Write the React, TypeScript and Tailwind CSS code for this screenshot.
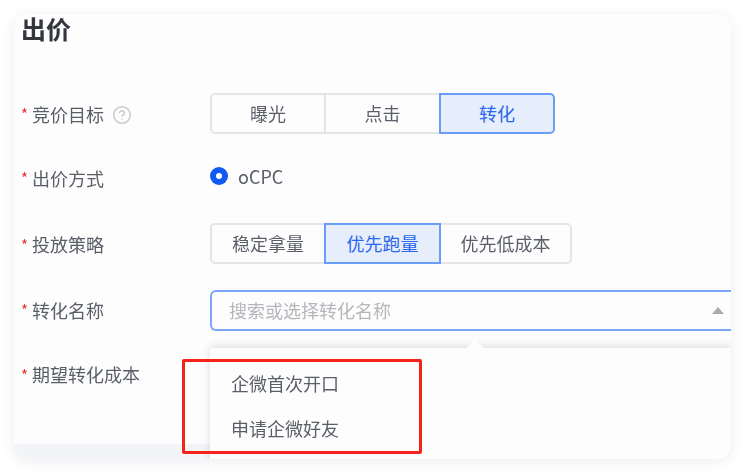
import { CircleHelp } from 'lucide-react'

const FONT = "font-['Noto_Sans_CJK_SC','Noto_Sans',sans-serif]"

function Label({ text, shift = '', children }: { text: string; shift?: string; children?: React.ReactNode }) {
  return (
    <div className={`w-[189px] shrink-0 flex items-center text-[18px] leading-none text-[#5a5e66] ${shift}`}>
      <span className="w-[11px] text-[15px] text-[#e5352b]">*</span>
      <span>{text}</span>
      {children}
    </div>
  )
}

function Segments({ items, active, widths }: { items: string[]; active: number; widths: string[] }) {
  return (
    <div className="flex h-[41px]">
      {items.map((item, i) => (
        <div
          key={item}
          className={`${widths[i]} flex items-center justify-center border-2 text-[18px] ${
            i === active
              ? 'relative z-10 border-[#6b9cf8] bg-[#e6eefc] text-[#2a66ee]'
              : 'border-[#e4e5e7] text-[#5a5e66]'
          } ${i > 0 ? '-ml-[2px]' : ''} ${i === 0 ? 'rounded-l-[5px]' : ''} ${
            i === items.length - 1 ? 'rounded-r-[5px]' : ''
          }`}
        >
          {item}
        </div>
      ))}
    </div>
  )
}

export default function App() {
  return (
    <div className={`${FONT} w-[745px] h-[473px] bg-white p-[14px] overflow-hidden`}>
      <div className="relative w-[717px] h-[445px] rounded-[14px] bg-[#fdfdfe] shadow-[0_2px_14px_rgba(40,50,80,0.09)] flex flex-col blur-[0.6px]">
        <div className="flex-1 pl-[7px]">
          <div className="h-[32px] text-[25px] leading-[28px] font-bold text-[#33363c]">出价</div>

          <div className="mt-[47px] flex items-center h-[41px]">
            <Label text="竞价目标">
              <CircleHelp className="ml-[8px] mt-[2px] w-[20px] h-[20px] text-[#c9cacc]" strokeWidth={1.8} />
            </Label>
            <Segments items={['曝光', '点击', '转化']} active={2} widths={['w-[116px]', 'w-[117px]', 'w-[116px]']} />
          </div>

          <div className="mt-[23px] flex items-center h-[41px]">
            <Label text="出价方式" />
            <div className="flex items-center -mt-[3px] text-[18px] text-[#5a5e66]">
              <span className="w-[18px] h-[18px] rounded-full bg-[#1059f3] flex items-center justify-center">
                <span className="w-[6px] h-[6px] rounded-full bg-white" />
              </span>
              <span className="ml-[10px]">oCPC</span>
            </div>
          </div>

          <div className="mt-[25px] flex items-center h-[41px]">
            <Label text="投放策略" shift="mt-[1px]" />
            <Segments
              items={['稳定拿量', '优先跑量', '优先低成本']}
              active={1}
              widths={['w-[116px]', 'w-[117px]', 'w-[133px]']}
            />
          </div>

          <div className="mt-[26px] flex items-center h-[41px]">
            <Label text="转化名称" shift="-mt-[2px]" />
            <div className="flex-1 h-[41px] flex items-center justify-between pl-[17px] pr-[7px] rounded-l-[6px] border-2 border-r-0 border-[#7aa5f8] text-[18px] text-[#b4b6ba]">
              <span>搜索或选择转化名称</span>
              <svg width="12" height="7" viewBox="0 0 12 7" className="text-[#a9abb2]">
                <path d="M6 0 L12 7 L0 7 Z" fill="currentColor" />
              </svg>
            </div>
          </div>

          <div className="mt-[24px] flex items-center h-[41px]">
            <Label text="期望转化成本" shift="-mt-[3px]" />
          </div>
        </div>
        <div className="h-[15px] rounded-b-[14px] bg-[#f3f4f8]" />

        {/* 下拉层 */}
        <div className="absolute left-[186px] right-0 top-[318px] bottom-0 pl-[10px] pt-[16px] rounded-br-[14px] overflow-hidden">
          <div className="relative h-[120px] bg-[#fdfdfe] shadow-[0_-2px_8px_rgba(60,65,90,0.16)] pt-[17px] pl-[21px] text-[18px] text-[#5a5e66]">
            <span className="absolute left-[259px] -top-[6px] w-[12px] h-[12px] rotate-45 bg-[#fdfdfe]" />
            <div className="h-[45px] leading-[36px]">企微首次开口</div>
            <div className="h-[45px] leading-[36px]">申请企微好友</div>
          </div>
        </div>

        {/* 标注框 */}
        <div className="absolute left-[168px] top-[345px] w-[240px] h-[95px] border-[3px] border-[#f5231c] rounded-[2px]" />
      </div>
    </div>
  )
}
